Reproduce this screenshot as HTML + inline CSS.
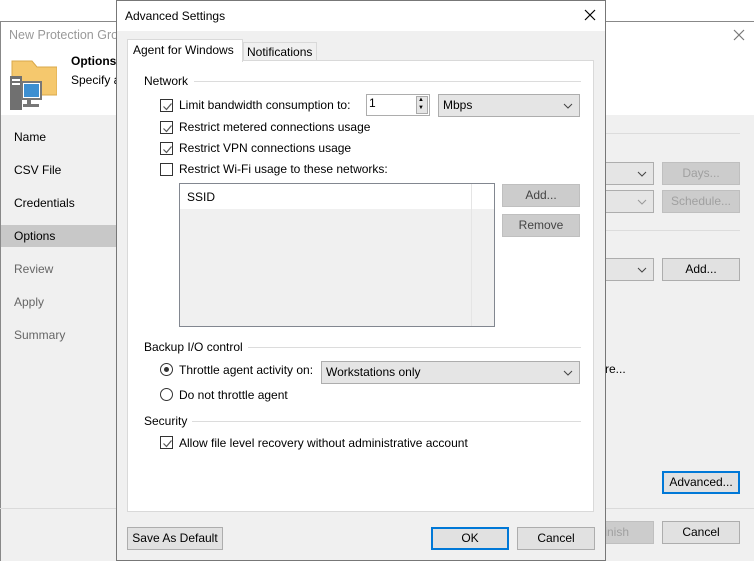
<!DOCTYPE html><html><head><style>
*{box-sizing:border-box}body{margin:0;width:754px;height:561px;position:relative;overflow:hidden;background:#fff;font-family:"Liberation Sans",sans-serif;font-size:12px;color:#000}
.a{position:absolute}
.btn{position:absolute;background:#e1e1e1;border:1px solid #adadad;text-align:center;line-height:20px;font-size:12px}
.dis{color:#a0a0a0;background:#ccc;border-color:#bfbfbf}
.cb{position:absolute;width:13px;height:13px;border:1px solid #333;background:#fff}
.cb svg{position:absolute;left:1px;top:1px}
.lbl{position:absolute;font-size:12px;white-space:nowrap}
.sep{position:absolute;height:1px;background:#dcdcdc}
.dd{position:absolute;background:#e5e5e5;border:1px solid #adadad;line-height:20px;padding-left:4px}
.chev{position:absolute;right:6px;top:0}
</style></head><body>
<div class="a" style="left:0;top:21px;width:754px;height:540px;border-top:1px solid #888;border-left:1px solid #888;background:#f0f0f0"></div>
<div class="a" style="left:1px;top:22px;width:753px;height:93px;background:#fff"></div>
<div class="lbl" style="left:9px;top:28px;color:#999;font-size:12.5px">New Protection Grou</div>
<svg class="a" style="left:733px;top:29px" width="12" height="12"><path d="M1 1l10 10M11 1L1 11" stroke="#777" stroke-width="1.2"/></svg>
<svg class="a" style="left:10px;top:60px" width="47" height="50"><path d="M2 1h20l5 6h20v28H2z" fill="#f5c86d" stroke="#d9a84a"/><rect x="0" y="16" width="12" height="34" fill="#707070"/><rect x="2" y="19" width="8" height="2" fill="#fff"/><rect x="2" y="23" width="8" height="2" fill="#fff"/><rect x="12" y="22" width="19" height="17" fill="#fff" stroke="#777" stroke-width="2"/><rect x="14" y="24" width="15" height="13" fill="#3d8fd1"/><rect x="17" y="39" width="4" height="5" fill="#777"/><rect x="13" y="44" width="16" height="3" fill="#777"/></svg>
<div class="lbl" style="left:71px;top:54px;font-weight:bold">Options</div>
<div class="lbl" style="left:71px;top:73px">Specify a</div>
<div class="a" style="left:1px;top:225px;width:116px;height:22px;background:#c8c8c8"></div>
<div class="lbl" style="left:14px;top:130px">Name</div>
<div class="lbl" style="left:14px;top:163px">CSV File</div>
<div class="lbl" style="left:14px;top:196px">Credentials</div>
<div class="lbl" style="left:14px;top:229px">Options</div>
<div class="lbl" style="left:14px;top:262px;color:#666">Review</div>
<div class="lbl" style="left:14px;top:295px;color:#666">Apply</div>
<div class="lbl" style="left:14px;top:328px;color:#666">Summary</div>
<div class="sep" style="left:605px;top:133px;width:135px"></div>
<div class="sep" style="left:605px;top:230px;width:135px"></div>
<div class="sep" style="left:0;top:508px;width:754px;background:#dadada"></div>
<div class="dd dis" style="left:600px;top:162px;width:54px;height:23px;border-left:none"><svg class="chev" width="10" height="20"><path d="M1 9l4 4 4-4" stroke="#444" fill="none"/></svg></div>
<div class="dd dis" style="left:600px;top:190px;width:54px;height:23px;border-left:none"><svg class="chev" width="10" height="20"><path d="M1 9l4 4 4-4" stroke="#999" fill="none"/></svg></div>
<div class="btn dis" style="left:662px;top:162px;width:78px;height:23px">Days...</div>
<div class="btn dis" style="left:662px;top:190px;width:78px;height:23px">Schedule...</div>
<div class="dd" style="left:600px;top:258px;width:54px;height:23px;border-left:none"><svg class="chev" width="10" height="20"><path d="M1 9l4 4 4-4" stroke="#444" fill="none"/></svg></div>
<div class="btn" style="left:662px;top:258px;width:78px;height:23px">Add...</div>
<div class="lbl" style="left:605px;top:362px">re...</div>
<div class="btn" style="left:662px;top:471px;width:78px;height:23px;border:2px solid #0078d7;line-height:19px">Advanced...</div>
<div class="btn dis" style="left:583px;top:521px;width:71px;height:23px;text-align:right;padding-right:24px">inish</div>
<div class="btn" style="left:662px;top:521px;width:78px;height:23px">Cancel</div>
<div class="a" style="left:116px;top:0;width:490px;height:561px;border:1px solid #777;background:#f0f0f0"></div>
<div class="a" style="left:117px;top:1px;width:488px;height:30px;background:#fff"></div>
<div class="lbl" style="left:125px;top:9px">Advanced Settings</div>
<svg class="a" style="left:584px;top:9px" width="12" height="12"><path d="M1 1l10 10M11 1L1 11" stroke="#000" stroke-width="1.2"/></svg>
<div class="a" style="left:127px;top:60px;width:467px;height:452px;background:#fff;border:1px solid #d9d9d9"></div>
<div class="a" style="left:243px;top:42px;width:74px;height:19px;background:#f0f0f0;border:1px solid #d9d9d9"></div>
<div class="lbl" style="left:247px;top:45px">Notifications</div>
<div class="a" style="left:127px;top:39px;width:116px;height:23px;background:#fff;border:1px solid #d9d9d9;border-bottom:none"></div>
<div class="lbl" style="left:133px;top:43px">Agent for Windows</div>
<div class="lbl" style="left:144px;top:74px">Network</div><div class="sep" style="left:194px;top:81px;width:387px"></div>
<svg width="0" height="0" style="position:absolute"><defs><path id="ck" d="M1.5 5.5l3 3 5-6" stroke="#555" stroke-width="1.2" fill="none"/></defs></svg>
<div class="cb" style="left:160px;top:99px"><svg width="11" height="11"><use href="#ck"/></svg></div><div class="lbl" style="left:179px;top:98px">Limit bandwidth consumption to:</div>
<div class="a" style="left:366px;top:94px;width:64px;height:22px;border:1px solid #adadad;background:#fff"></div><div class="lbl" style="left:369px;top:96px">1</div>
<div class="a" style="left:416px;top:96px;width:12px;height:18px;background:#e5e5e5;border:1px solid #aaa"></div><div class="lbl" style="left:418px;top:96px;font-size:6px;line-height:8px">▲<br>▼</div>
<div class="dd" style="left:438px;top:94px;width:142px;height:23px">Mbps<svg class="chev" width="10" height="20"><path d="M1 9l4 4 4-4" stroke="#444" fill="none"/></svg></div>
<div class="cb" style="left:160px;top:121px"><svg width="11" height="11"><use href="#ck"/></svg></div><div class="lbl" style="left:179px;top:120px">Restrict metered connections usage</div>
<div class="cb" style="left:160px;top:142px"><svg width="11" height="11"><use href="#ck"/></svg></div><div class="lbl" style="left:179px;top:141px">Restrict VPN connections usage</div>
<div class="cb" style="left:160px;top:163px"></div><div class="lbl" style="left:179px;top:162px">Restrict Wi-Fi usage to these networks:</div>
<div class="a" style="left:179px;top:183px;width:316px;height:144px;border:1px solid #828790;background:#f0f0f0"></div>
<div class="a" style="left:180px;top:184px;width:314px;height:25px;background:#fff"></div>
<div class="a" style="left:471px;top:184px;width:1px;height:142px;background:#e5e5e5"></div>
<div class="lbl" style="left:187px;top:190px">SSID</div>
<div class="btn dis" style="left:502px;top:184px;width:78px;height:23px;color:#444">Add...</div>
<div class="btn dis" style="left:502px;top:214px;width:78px;height:23px;color:#444">Remove</div>
<div class="lbl" style="left:144px;top:340px">Backup I/O control</div><div class="sep" style="left:248px;top:347px;width:333px"></div>
<div class="a" style="left:160px;top:363px;width:13px;height:13px;border:1px solid #333;border-radius:50%"><div class="a" style="left:3px;top:3px;width:5px;height:5px;border-radius:50%;background:#333"></div></div>
<div class="lbl" style="left:179px;top:363px">Throttle agent activity on:</div>
<div class="dd" style="left:321px;top:361px;width:259px;height:23px">Workstations only<svg class="chev" width="10" height="20"><path d="M1 9l4 4 4-4" stroke="#444" fill="none"/></svg></div>
<div class="a" style="left:160px;top:388px;width:13px;height:13px;border:1px solid #333;border-radius:50%"></div>
<div class="lbl" style="left:179px;top:388px">Do not throttle agent</div>
<div class="lbl" style="left:144px;top:414px">Security</div><div class="sep" style="left:192px;top:421px;width:389px"></div>
<div class="cb" style="left:160px;top:436px"><svg width="11" height="11"><use href="#ck"/></svg></div><div class="lbl" style="left:179px;top:436px">Allow file level recovery without administrative account</div>
<div class="btn" style="left:127px;top:527px;width:96px;height:23px">Save As Default</div>
<div class="btn" style="left:431px;top:527px;width:78px;height:23px;border:2px solid #0078d7;line-height:19px">OK</div>
<div class="btn" style="left:517px;top:527px;width:78px;height:23px">Cancel</div>
</body></html>
